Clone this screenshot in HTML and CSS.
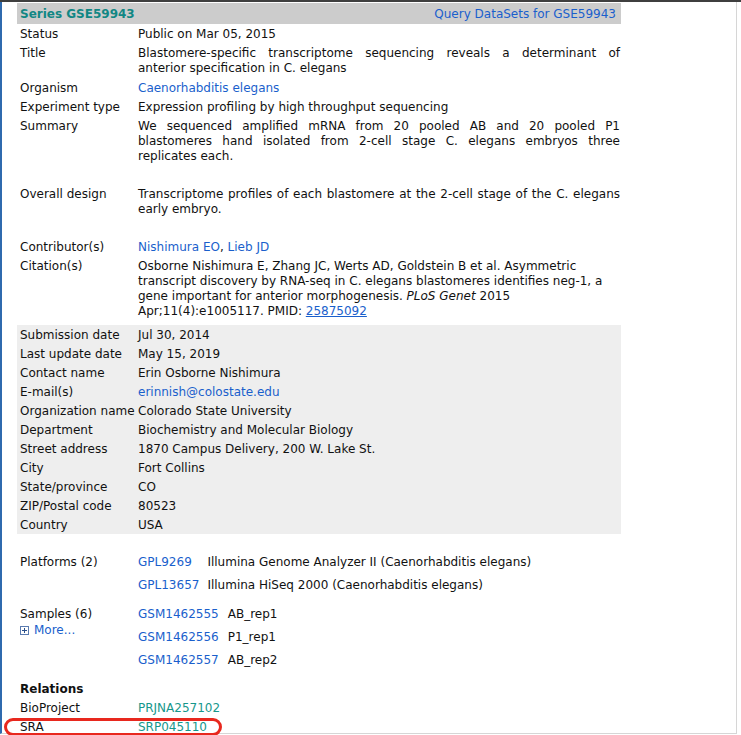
FILE: index.html
```html
<!DOCTYPE html>
<html>
<head>
<meta charset="utf-8">
<link rel="stylesheet" href="styles.css">
</head>
<body>
<div class="screen">
  <div class="window">
    <div class="geo">
      <div class="hdr"><span class="series">Series GSE59943</span><a class="link">Query DataSets for GSE59943</a></div>

      <div class="row"><div class="lbl">Status</div><div class="val">Public on Mar 05, 2015</div></div>
      <div class="row title"><div class="lbl">Title</div><div class="val just">Blastomere-specific transcriptome sequencing reveals a determinant of anterior specification in C. elegans</div></div>
      <div class="row"><div class="lbl">Organism</div><div class="val"><a class="link">Caenorhabditis elegans</a></div></div>
      <div class="row"><div class="lbl">Experiment type</div><div class="val">Expression profiling by high throughput sequencing</div></div>
      <div class="row para"><div class="lbl">Summary</div><div class="val just">We sequenced amplified mRNA from 20 pooled AB and 20 pooled P1 blastomeres hand isolated from 2-cell stage C. elegans embryos three replicates each.</div></div>
      <div class="row para"><div class="lbl">Overall design</div><div class="val just">Transcriptome profiles of each blastomere at the 2-cell stage of the C. elegans early embryo.</div></div>
      <div class="row"><div class="lbl">Contributor(s)</div><div class="val"><a class="link">Nishimura EO</a>, <a class="link">Lieb JD</a></div></div>
      <div class="row"><div class="lbl">Citation(s)</div><div class="val">Osborne Nishimura E, Zhang JC, Werts AD, Goldstein B et al. Asymmetric transcript discovery by RNA-seq in C. elegans blastomeres identifies neg-1, a gene important for anterior morphogenesis. <i>PLoS Genet</i> 2015 Apr;11(4):e1005117. PMID: <a class="link ul">25875092</a></div></div>

      <div class="contact">
        <div class="row"><div class="lbl">Submission date</div><div class="val">Jul 30, 2014</div></div>
        <div class="row"><div class="lbl">Last update date</div><div class="val">May 15, 2019</div></div>
        <div class="row"><div class="lbl">Contact name</div><div class="val">Erin Osborne Nishimura</div></div>
        <div class="row"><div class="lbl">E-mail(s)</div><div class="val"><a class="link">erinnish@colostate.edu</a></div></div>
        <div class="row"><div class="lbl">Organization name</div><div class="val">Colorado State University</div></div>
        <div class="row"><div class="lbl">Department</div><div class="val">Biochemistry and Molecular Biology</div></div>
        <div class="row"><div class="lbl">Street address</div><div class="val">1870 Campus Delivery, 200 W. Lake St.</div></div>
        <div class="row"><div class="lbl">City</div><div class="val">Fort Collins</div></div>
        <div class="row"><div class="lbl">State/province</div><div class="val">CO</div></div>
        <div class="row"><div class="lbl">ZIP/Postal code</div><div class="val">80523</div></div>
        <div class="row"><div class="lbl">Country</div><div class="val">USA</div></div>
      </div>

      <div class="row low sub platforms">
        <div class="lbl">Platforms (2)</div>
        <div class="val subgrid">
          <a class="link">GPL9269</a><span>Illumina Genome Analyzer II (Caenorhabditis elegans)</span>
          <a class="link">GPL13657</a><span>Illumina HiSeq 2000 (Caenorhabditis elegans)</span>
        </div>
      </div>

      <div class="row low sub samples">
        <div class="lbl">Samples (6)
          <div class="more"><svg class="plus" width="9" height="9" viewBox="0 0 9 9"><rect x="0.5" y="0.5" width="8" height="8" fill="#fff" stroke="#5a7bb0"/><path d="M2 4.5H7M4.5 2V7" stroke="#2a4f8a" stroke-width="1"/></svg><a class="link">More...</a></div>
        </div>
        <div class="val subgrid">
          <a class="link">GSM1462555</a><span>AB_rep1</span>
          <a class="link">GSM1462556</a><span>P1_rep1</span>
          <a class="link">GSM1462557</a><span>AB_rep2</span>
        </div>
      </div>

      <div class="row low relations"><div class="lbl bold">Relations</div></div>
      <div class="row low"><div class="lbl">BioProject</div><div class="val"><a class="teal">PRJNA257102</a></div></div>
      <div class="row low sra"><div class="lbl">SRA</div><div class="val"><a class="teal">SRP045110</a></div><div class="mark"></div></div>
    </div>
  </div>
</div>
</body>
</html>
```

FILE: styles.css
```css
html, body {
  margin: 0;
  padding: 0;
  background: #fff;
}
body {
  font-family: "DejaVu Sans", Verdana, sans-serif;
  font-size: 12px;
  line-height: 15px;
  color: #111;
}
.screen {
  width: 741px;
  height: 735px;
  border-top: 2px solid #3f3f3f;
  box-sizing: border-box;
  overflow: hidden;
}
.window {
  width: 737px;
  height: 732px;
  box-sizing: border-box;
  border-left: 2px solid #2f6aae;
  border-right: 1px solid #d6d6d6;
  border-bottom: 1px solid #d6d6d6;
  padding: 1px 0 0 15px;
}
.geo {
  width: 604px;
}
.hdr {
  display: flex;
  justify-content: space-between;
  background: #cccccc;
  padding: 4px 5px 2px 3px;
  height: 15px;
}
.series {
  font-weight: bold;
  color: #118784;
}
.link {
  color: #1a5fcc;
  text-decoration: none;
}
.link.ul {
  text-decoration: underline;
}
.teal {
  color: #16978c;
  text-decoration: none;
}
.row {
  display: grid;
  grid-template-columns: 121px 482px;
  padding: 3px 0 1px;
}
.row.low {
  padding: 2px 0;
}
.lbl {
  padding-left: 3px;
}
.bold {
  font-weight: bold;
}
.just {
  text-align: justify;
}
.title {
  padding-bottom: 2px;
}
.para .val {
  padding-bottom: 19px;
}
.contact {
  background: #eeeeee;
  margin-top: 5px;
}
.sub .lbl {
  padding-top: 4px;
}
.subgrid {
  display: grid;
  grid-template-columns: auto 1fr;
  column-gap: 8px;
  row-gap: 8px;
  padding: 4px 0;
}
.samples .subgrid {
  column-gap: 9px;
}
.platforms {
  margin-top: 15px;
}
.samples {
  margin-top: 2px;
}
.more {
  display: flex;
  align-items: center;
  gap: 5px;
  margin-top: 1px;
}
.plus {
  display: block;
}
.relations {
  margin-top: 6px;
}
.sra {
  position: relative;
}
.mark {
  position: absolute;
  left: -13px;
  top: 0px;
  width: 218px;
  height: 18px;
  box-sizing: border-box;
  border: 3px solid #e8281e;
  border-radius: 10px;
}
```
